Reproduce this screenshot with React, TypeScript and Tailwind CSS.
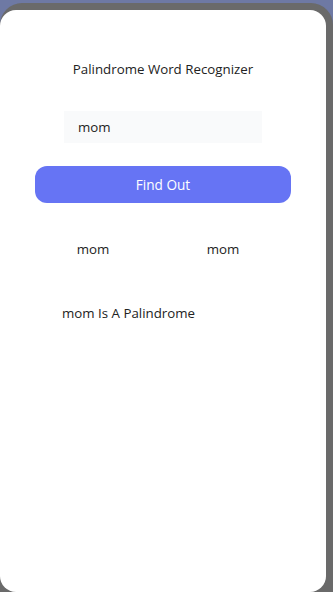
import { useState } from "react";

export default function App() {
  const [word, setWord] = useState("mom");
  const [checked, setChecked] = useState("mom");

  const reversed = checked.split("").reverse().join("");
  const isPalindrome = checked.toLowerCase() === reversed.toLowerCase();

  return (
    <div className="h-[592px] w-[333px] overflow-hidden bg-[#6e79a4] pt-[3px] font-['Open_Sans',sans-serif]">
      <div className="h-full rounded-tr-[22px] rounded-tl-[22px] bg-[#6a6a6a] pr-[7px] pt-[7px]">
        <div className="flex h-[582px] flex-col items-center rounded-[16px] bg-white">
          <h1 className="mt-[49px] text-[13.3px] leading-5 text-[#222]">Palindrome Word Recognizer</h1>

          <input
            className="mt-[32px] h-[32px] w-[198px] bg-[#f9fafb] px-[14px] text-[13.3px] text-[#222] outline-none"
            value={word}
            onChange={(event) => setWord(event.target.value)}
          />

          <button
            type="button"
            className="mt-[23px] h-[37px] w-[256px] rounded-[12px] bg-[#6674f4] pt-px text-[13.6px] text-white"
            onClick={() => setChecked(word)}
          >
            Find Out
          </button>

          <div className="mt-[37px] flex w-full pl-[58px] pr-[68px] text-[13.3px] text-[#222]">
            <span className="w-[70px] text-center">{checked}</span>
            <span className="ml-auto w-[70px] text-center">{reversed}</span>
          </div>

          <p className="mt-[44px] self-start pl-[62px] text-[13.3px] text-[#222]">
            {checked} {isPalindrome ? "Is A Palindrome" : "Is Not A Palindrome"}
          </p>
        </div>
      </div>
    </div>
  );
}
